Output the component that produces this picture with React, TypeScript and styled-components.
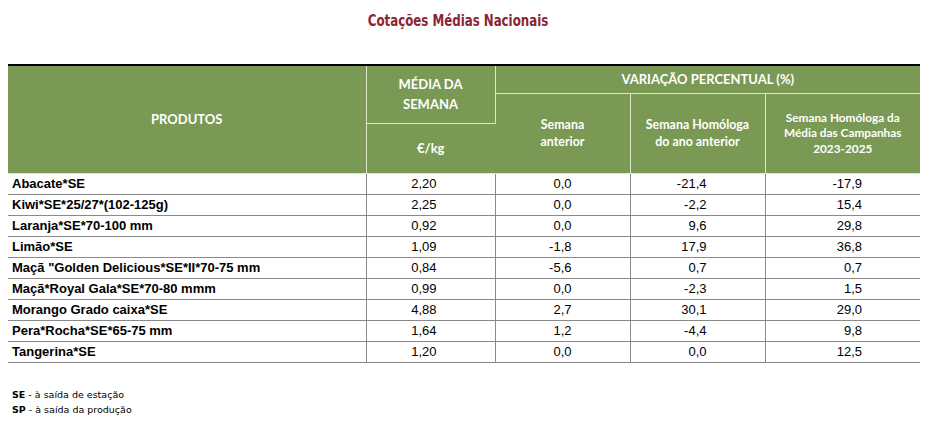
import React from "react";
import styled, { createGlobalStyle } from "styled-components";

const Global = createGlobalStyle`
  html, body { margin: 0; padding: 0; background: #ffffff; }
  body { font-family: "Liberation Sans", Arial, sans-serif; }
`;

const Page = styled.div`
  width: 937px;
  height: 432px;
  box-sizing: border-box;
  padding: 11px 0 0 8px;
  display: flex;
  flex-direction: column;
`;

const Title = styled.h1`
  margin: 0;
  width: 912px;
  box-sizing: border-box;
  padding-right: 13px;
  text-align: center;
  font-family: "DejaVu Sans Condensed", "DejaVu Sans", sans-serif;
  font-weight: bold;
  font-size: 16px;
  line-height: 20px;
  color: #8b2535;
`;

const TitleInner = styled.span`
  display: inline-block;
  transform: scaleX(0.82);
  transform-origin: center;
  white-space: nowrap;
`;

const Table = styled.table`
  margin-top: 33px;
  width: 912px;
  border-collapse: collapse;
  table-layout: fixed;
  border-top: 2px solid #000;
`;

const HeadRow = styled.tr<{ $h: number }>`
  height: ${(p) => p.$h}px;
`;

const Th = styled.th<{ $lh?: number; $fs?: number }>`
  background: #7a9954;
  color: #ffffff;
  font-family: Lato, "Noto Sans", sans-serif;
  font-weight: bold;
  font-size: ${(p) => p.$fs ?? 13}px;
  line-height: ${(p) => p.$lh ?? 20}px;
  text-align: center;
  vertical-align: middle;
  padding: 0;
  border: 1px solid #dde5cf;
  border-top: none;
  &:first-child { border-left: none; }
  &:last-child { border-right: none; }
`;

const Td = styled.td<{ $name?: boolean }>`
  box-sizing: border-box;
  padding: ${(p) => (p.$name ? "0 0 0 4px" : "0 58px 0 0")};
  height: 21px;
  line-height: 19px;
  font-size: 13px;
  font-weight: ${(p) => (p.$name ? "bold" : "normal")};
  text-align: ${(p) => (p.$name ? "left" : "right")};
  color: #000;
  white-space: nowrap;
  border-bottom: 1px solid #8a8a8a;
  border-left: 1px solid #8a8a8a;
  &:first-child { border-left: none; }
`;

const Notes = styled.div`
  margin-top: 24px;
  padding-left: 4px;
  font-family: "DejaVu Sans", sans-serif;
  font-size: 9.5px;
  line-height: 15px;
  color: #000;
`;

const Note = styled.div``;

const Abbr = styled.b`
  font-weight: bold;
`;

type Row = [string, string, string, string, string];

const rows: Row[] = [
  ["Abacate*SE", "2,20", "0,0", "-21,4", "-17,9"],
  ["Kiwi*SE*25/27*(102-125g)", "2,25", "0,0", "-2,2", "15,4"],
  ["Laranja*SE*70-100 mm", "0,92", "0,0", "9,6", "29,8"],
  ["Limão*SE", "1,09", "-1,8", "17,9", "36,8"],
  ["Maçã \"Golden Delicious*SE*II*70-75 mm", "0,84", "-5,6", "0,7", "0,7"],
  ["Maçã*Royal Gala*SE*70-80 mmm", "0,99", "0,0", "-2,3", "1,5"],
  ["Morango Grado caixa*SE", "4,88", "2,7", "30,1", "29,0"],
  ["Pera*Rocha*SE*65-75 mm", "1,64", "1,2", "-4,4", "9,8"],
  ["Tangerina*SE", "1,20", "0,0", "0,0", "12,5"],
];

export default function App() {
  return (
    <Page>
      <Global />
      <Title>
        <TitleInner>Cotações Médias Nacionais</TitleInner>
      </Title>
      <Table>
        <colgroup>
          <col style={{ width: 358 }} />
          <col style={{ width: 129 }} />
          <col style={{ width: 135 }} />
          <col style={{ width: 135 }} />
          <col style={{ width: 155 }} />
        </colgroup>
        <thead>
          <HeadRow $h={28}>
            <Th rowSpan={3}>PRODUTOS</Th>
            <Th rowSpan={2}>
              MÉDIA DA
              <br />
              SEMANA
            </Th>
            <Th colSpan={3}>VARIAÇÃO PERCENTUAL (%)</Th>
          </HeadRow>
          <HeadRow $h={30}>
            <Th rowSpan={2} $lh={17} $fs={12.4}>
              Semana
              <br />
              anterior
            </Th>
            <Th rowSpan={2} $lh={17} $fs={12.4}>
              Semana Homóloga
              <br />
              do ano anterior
            </Th>
            <Th rowSpan={2} $lh={15.5} $fs={11.8}>
              Semana Homóloga da
              <br />
              Média das Campanhas
              <br />
              2023-2025
            </Th>
          </HeadRow>
          <HeadRow $h={50}>
            <Th>€/kg</Th>
          </HeadRow>
        </thead>
        <tbody>
          {rows.map((r) => (
            <tr key={r[0]}>
              <Td $name>{r[0]}</Td>
              <Td>{r[1]}</Td>
              <Td>{r[2]}</Td>
              <Td>{r[3]}</Td>
              <Td>{r[4]}</Td>
            </tr>
          ))}
        </tbody>
      </Table>
      <Notes>
        <Note>
          <Abbr>SE</Abbr> - à saída de estação
        </Note>
        <Note>
          <Abbr>SP</Abbr> - à saída da produção
        </Note>
      </Notes>
    </Page>
  );
}
